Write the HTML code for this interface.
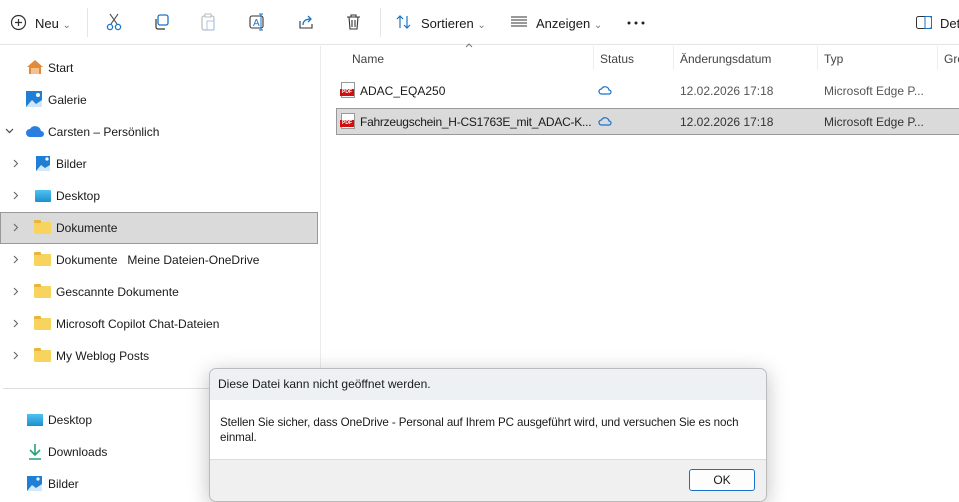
<!DOCTYPE html>
<html><head><meta charset="utf-8"><style>
*{box-sizing:border-box;margin:0;padding:0}
body{width:959px;height:500px;overflow:hidden;background:#fff;font-family:"Liberation Sans",sans-serif;font-size:12px;color:#1a1a1a;position:relative}
.a{position:absolute;white-space:nowrap}
.tb{left:0;top:0;width:959px;height:45px;border-bottom:1px solid #e5e5e5}
.chev{color:#777;font-size:10px}
.row{position:absolute;left:0;width:318px;height:31px}
.row .t{position:absolute;left:56px;top:9px}
.row .c{position:absolute;left:13px;top:11px}
.fold{position:absolute;left:34px;top:10px;width:17px;height:12px;background:#f8d35e;border-radius:1px}
.fold:before{content:"";position:absolute;left:0;top:-2px;width:7px;height:3px;background:#e9b53a;border-radius:1px 1px 0 0}
.pdf{position:absolute;width:14px;height:16px;border:1px solid #999;background:#fff}
.pdf b{position:absolute;left:-2px;top:6px;width:14px;height:7px;background:#d01010;color:#fff;font-size:5px;line-height:7px;text-align:center;font-weight:bold}
</style></head><body>
<div class="a tb"></div>
<!-- toolbar -->
<svg class="a" style="left:10px;top:14px" width="17" height="17"><circle cx="8.5" cy="8.5" r="7" fill="none" stroke="#333" stroke-width="1.2"/><path d="M8.5 5v7M5 8.5h7" stroke="#333" stroke-width="1.2"/></svg>
<div class="a" style="left:35px;top:16px;font-size:13px">Neu <span class="chev">&#8964;</span></div>
<div class="a" style="left:87px;top:8px;width:1px;height:29px;background:#e5e5e5"></div>
<svg class="a" style="left:105px;top:13px" width="18" height="18"><path d="M5 1l7 10M13 1L6 11" stroke="#555" stroke-width="1.1"/><circle cx="5" cy="14" r="2.6" fill="none" stroke="#1a73c9" stroke-width="1.3"/><circle cx="13" cy="14" r="2.6" fill="none" stroke="#1a73c9" stroke-width="1.3"/></svg>
<svg class="a" style="left:153px;top:14px" width="17" height="17"><rect x="5" y="1" width="10" height="10" rx="2" fill="none" stroke="#1a73c9" stroke-width="1.3"/><path d="M3 5v8a2 2 0 0 0 2 2h7" fill="none" stroke="#333" stroke-width="1.2"/></svg>
<svg class="a" style="left:200px;top:13px" width="17" height="18"><rect x="2" y="3" width="12" height="14" rx="2" fill="none" stroke="#bbb" stroke-width="1.2"/><rect x="5" y="1" width="6" height="3" fill="#fff" stroke="#bbb"/><rect x="7" y="8" width="7" height="9" fill="none" stroke="#a8c8ea"/></svg>
<svg class="a" style="left:248px;top:13px" width="18" height="18"><rect x="2" y="3" width="13" height="12" rx="2" fill="none" stroke="#333" stroke-width="1.1"/><text x="5" y="13" font-size="10" fill="#1a73c9" font-family="Liberation Sans">A</text><path d="M13 1v16M11 1h4M11 17h4" stroke="#1a73c9"/></svg>
<svg class="a" style="left:297px;top:13px" width="18" height="18"><path d="M3 8v7h12v-4" fill="none" stroke="#333" stroke-width="1.1"/><path d="M6 12c0-4 3-6 8-6M11 3l3 3-3 3" fill="none" stroke="#1a73c9" stroke-width="1.3"/></svg>
<svg class="a" style="left:345px;top:13px" width="17" height="18"><path d="M2 4h13M6 4V2h5v2M4 4l1 12h7l1-12M7 7v7M10 7v7" fill="none" stroke="#333" stroke-width="1.1"/></svg>
<div class="a" style="left:380px;top:8px;width:1px;height:29px;background:#e5e5e5"></div>
<svg class="a" style="left:396px;top:14px" width="16" height="16"><path d="M4 14V2M1 5l3-3 3 3M11 2v12M8 11l3 3 3-3" fill="none" stroke="#1a73c9" stroke-width="1.2"/></svg>
<div class="a" style="left:421px;top:16px;font-size:13px">Sortieren <span class="chev">&#8964;</span></div>
<svg class="a" style="left:511px;top:16px" width="17" height="12"><path d="M0 1h16M0 4h16M0 7h16M0 10h16" stroke="#333"/></svg>
<div class="a" style="left:536px;top:16px;font-size:13px">Anzeigen <span class="chev">&#8964;</span></div>
<svg class="a" style="left:627px;top:21px" width="18" height="4"><circle cx="2" cy="2" r="1.5" fill="#222"/><circle cx="9" cy="2" r="1.5" fill="#222"/><circle cx="16" cy="2" r="1.5" fill="#222"/></svg>
<svg class="a" style="left:916px;top:15px" width="16" height="15"><rect x="0.5" y="1.5" width="15" height="12" rx="2" fill="none" stroke="#333"/><rect x="9" y="1.5" width="6.5" height="12" fill="none" stroke="#1a73c9"/></svg>
<div class="a" style="left:940px;top:16px;font-size:13px">Det</div>
<!-- sidebar -->
<div class="a" style="left:320px;top:46px;width:1px;height:454px;background:#ececec"></div>
<svg class="a" style="left:26px;top:59px" width="18" height="16"><path d="M9 1L1 8h2v7h4v-4h4v4h4V8h2z" fill="#e28a3b"/><path d="M5 9h8v6H5z" fill="#f5c08b"/></svg>
<div class="a" style="left:48px;top:61px">Start</div>
<svg class="a" style="left:26px;top:91px" width="16" height="16"><rect width="16" height="16" fill="#1f7ed6"/><path d="M0 16l6-7 4 4 6-4v7z" fill="#cfe5fa"/><circle cx="12" cy="4" r="2" fill="#fff"/></svg>
<div class="a" style="left:48px;top:93px">Galerie</div>
<svg class="a" style="left:5px;top:128px" width="9" height="6"><path d="M1 1l3.5 3.5L8 1" fill="none" stroke="#444" stroke-width="1.2"/></svg>
<svg class="a" style="left:26px;top:125px" width="18" height="12"><path d="M4 12a4 4 0 0 1 0-8 6 6 0 0 1 11 2 3 3 0 0 1 0 6z" fill="#2a7ee0"/></svg>
<div class="a" style="left:48px;top:125px">Carsten – Persönlich</div>
<div class="row" style="top:148px"><svg class="c" width="6" height="9"><path d="M1 1l3.5 3.5L1 8" fill="none" stroke="#666" stroke-width="1.1"/></svg><svg class="a" style="left:36px;top:8px" width="14" height="15"><rect width="14" height="15" fill="#1f7ed6"/><path d="M0 15l5-6 4 3 5-3v6z" fill="#d5e8fb"/><circle cx="11" cy="3" r="1.6" fill="#fff"/></svg><span class="t">Bilder</span></div>
<div class="row" style="top:180px"><svg class="c" width="6" height="9"><path d="M1 1l3.5 3.5L1 8" fill="none" stroke="#666" stroke-width="1.1"/></svg><div class="a" style="left:35px;top:10px;width:16px;height:12px;background:linear-gradient(#4fc3ef,#1b8fd0);border-radius:1px"></div><span class="t">Desktop</span></div>
<div class="a" style="left:0;top:212px;width:318px;height:32px;background:#dadada;border:1px solid #999"></div>
<div class="row" style="top:212px"><svg class="c" width="6" height="9"><path d="M1 1l3.5 3.5L1 8" fill="none" stroke="#666" stroke-width="1.1"/></svg><div class="fold"></div><span class="t">Dokumente</span></div>
<div class="row" style="top:244px"><svg class="c" width="6" height="9"><path d="M1 1l3.5 3.5L1 8" fill="none" stroke="#666" stroke-width="1.1"/></svg><div class="fold"></div><span class="t">Dokumente &nbsp; Meine Dateien-OneDrive</span></div>
<div class="row" style="top:276px"><svg class="c" width="6" height="9"><path d="M1 1l3.5 3.5L1 8" fill="none" stroke="#666" stroke-width="1.1"/></svg><div class="fold"></div><span class="t">Gescannte Dokumente</span></div>
<div class="row" style="top:308px"><svg class="c" width="6" height="9"><path d="M1 1l3.5 3.5L1 8" fill="none" stroke="#666" stroke-width="1.1"/></svg><div class="fold"></div><span class="t">Microsoft Copilot Chat-Dateien</span></div>
<div class="row" style="top:340px"><svg class="c" width="6" height="9"><path d="M1 1l3.5 3.5L1 8" fill="none" stroke="#666" stroke-width="1.1"/></svg><div class="fold"></div><span class="t">My Weblog Posts</span></div>
<div class="a" style="left:3px;top:388px;width:315px;height:1px;background:#ddd"></div>
<div class="a" style="left:27px;top:414px;width:16px;height:12px;background:linear-gradient(#4fc3ef,#1b8fd0)"></div>
<div class="a" style="left:48px;top:413px">Desktop</div>
<svg class="a" style="left:27px;top:443px" width="16" height="17"><path d="M8 1v11M3 7l5 5 5-5M2 16h12" fill="none" stroke="#22a37a" stroke-width="1.6"/></svg>
<div class="a" style="left:48px;top:445px">Downloads</div>
<svg class="a" style="left:27px;top:476px" width="15" height="15"><rect width="15" height="15" fill="#1f7ed6"/><path d="M0 15l5-6 4 3 6-4v7z" fill="#d5e8fb"/><circle cx="11" cy="3" r="1.6" fill="#fff"/></svg>
<div class="a" style="left:48px;top:477px">Bilder</div>
<!-- files -->
<svg class="a" style="left:465px;top:43px" width="8" height="5"><path d="M1 4l3-3 3 3" fill="none" stroke="#777"/></svg>
<div class="a" style="left:352px;top:52px;color:#444">Name</div>
<div class="a" style="left:593px;top:46px;width:1px;height:24px;background:#eee"></div>
<div class="a" style="left:600px;top:52px;color:#444">Status</div>
<div class="a" style="left:673px;top:46px;width:1px;height:24px;background:#eee"></div>
<div class="a" style="left:680px;top:52px;color:#444">Änderungsdatum</div>
<div class="a" style="left:817px;top:46px;width:1px;height:24px;background:#eee"></div>
<div class="a" style="left:824px;top:52px;color:#444">Typ</div>
<div class="a" style="left:937px;top:46px;width:1px;height:24px;background:#eee"></div>
<div class="a" style="left:944px;top:52px;color:#444">Grö</div>
<div class="a" style="left:336px;top:108px;width:623px;height:27px;background:#dadada;border:1px solid #999;border-right:none"></div>
<div class="pdf" style="left:341px;top:82px"><b>PDF</b></div>
<div class="a" style="left:360px;top:84px">ADAC_EQA250</div>
<div class="pdf" style="left:341px;top:113px"><b>PDF</b></div>
<div class="a" style="left:360px;top:115px;letter-spacing:-0.25px">Fahrzeugschein_H-CS1763E_mit_ADAC-K...</div>
<svg class="a" style="left:598px;top:85px" width="14" height="10"><path d="M3.5 9a2.5 2.5 0 0 1 0-5 4 4 0 0 1 7.5 1 2 2 0 0 1 0 4z" fill="none" stroke="#1a73c9" stroke-width="1.2"/></svg>
<svg class="a" style="left:598px;top:116px" width="14" height="10"><path d="M3.5 9a2.5 2.5 0 0 1 0-5 4 4 0 0 1 7.5 1 2 2 0 0 1 0 4z" fill="none" stroke="#1a73c9" stroke-width="1.2"/></svg>
<div class="a" style="left:680px;top:84px;color:#555">12.02.2026 17:18</div>
<div class="a" style="left:680px;top:115px;color:#333">12.02.2026 17:18</div>
<div class="a" style="left:824px;top:84px;color:#555">Microsoft Edge P...</div>
<div class="a" style="left:824px;top:115px;color:#333">Microsoft Edge P...</div>
<!-- dialog -->
<div class="a" style="left:209px;top:368px;width:558px;height:134px;border:1px solid #bbb;border-radius:7px;overflow:hidden;box-shadow:0 4px 20px rgba(0,0,0,.25);background:#f0f0f0;white-space:normal">
<div style="height:31px;background:#edf1f4;padding:8px 0 0 8px">Diese Datei kann nicht geöffnet werden.</div>
<div style="height:60px;background:#fff;padding:15px 10px 0 10px;line-height:15px;border-bottom:1px solid #dcdcdc;font-size:11.6px;letter-spacing:-0.1px"><span style="display:block;width:532px">Stellen Sie sicher, dass OneDrive - Personal auf Ihrem PC ausgeführt wird, und versuchen Sie es noch einmal.</span></div>
<div style="position:absolute;left:479px;top:100px;width:66px;height:22px;border:1px solid #1a6fc9;border-radius:3px;background:#fdfdfd;text-align:center;line-height:20px">OK</div>
</div>
</body></html>
